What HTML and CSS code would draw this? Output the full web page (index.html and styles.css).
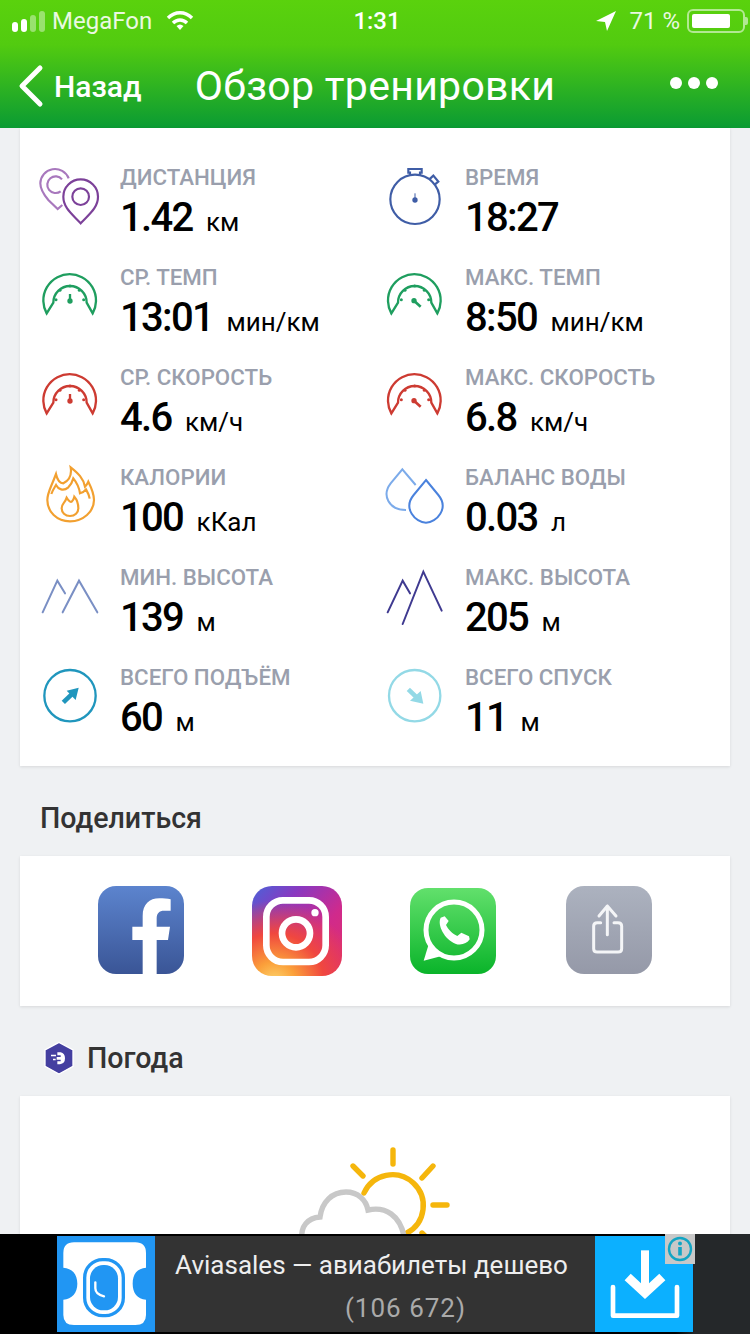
FILE: index.html
```html
<!DOCTYPE html>
<html lang="ru">
<head>
    <meta charset="UTF-8">
    <title>Обзор тренировки</title>
    <link rel="stylesheet" href="styles.css">
</head>
<body>
    <header class="top">
        <div class="status">
            <div class="status-left">
                <span class="signal"><i class="on"></i><i class="on"></i><i></i><i></i></span>
                <span class="carrier">MegaFon</span>
                <svg class="wifi" width="28" height="22" viewBox="0 0 28 22">
                    <path d="M2 8 C9 1 19 1 26 8" fill="none" stroke="#fff" stroke-width="3.4"/>
                    <path d="M7 13 C11 9 17 9 21 13" fill="none" stroke="#fff" stroke-width="3.4"/>
                    <path d="M10.5 16 C13 14 15 14 17.5 16 L14 20 Z" fill="#fff"/>
                </svg>
            </div>
            <div class="clock">1:31</div>
            <div class="status-right">
                <svg width="20" height="20" viewBox="0 0 20 20"><path d="M20 0 L0 10 L9 11 L11 20 Z" fill="#fff"/></svg>
                <span class="percent">71 %</span>
                <span class="battery"><b></b></span>
                <span class="battery-tip"></span>
            </div>
        </div>
        <nav class="nav">
            <a class="back">
                <svg width="28" height="44" viewBox="0 0 28 44"><path d="M24 4 L6 22 L24 40" fill="none" stroke="#fff" stroke-width="5" stroke-linecap="round" stroke-linejoin="round"/></svg>
                <span>Назад</span>
            </a>
            <h1 class="title">Обзор тренировки</h1>
            <div class="more"><i></i><i></i><i></i></div>
        </nav>
    </header>

    <section class="card stats">
        <div class="stat">
            <svg class="ico" viewBox="45 30 210 210" fill="none" stroke-width="6.5">
                <path d="M146 85 A44 44 0 0 0 61 100 Q61 122 85 150 L113 177 L127 165" stroke="#a878bd"/>
                <path d="M126 88 A25 25 0 1 0 122 124" stroke="#a878bd"/>
                <path d="M182 220 C160 195 130 175 130 140 A52 52 0 0 1 234 140 C234 175 204 195 182 220 Z" stroke="#7c4199"/>
                <circle cx="182" cy="140" r="25" stroke="#7c4199"/>
            </svg>
            <div class="stat-text"><div class="label">ДИСТАНЦИЯ</div><div class="value">1.42<span class="unit">км</span></div></div>
        </div>
        <div class="stat">
            <svg class="ico" viewBox="30 30 210 210" fill="none" stroke="#3f5da6" stroke-width="6.5">
                <circle cx="135" cy="148" r="74"/>
                <path d="M120 74 V68 H115 V57 H155 V68 H150 V76"/>
                <path d="M178 88 L190 77 L205 95 L194 104"/>
                <path d="M135 130 V150" stroke-width="3"/>
                <circle cx="135" cy="150" r="8" fill="#3f5da6" stroke="none"/>
            </svg>
            <div class="stat-text"><div class="label">ВРЕМЯ</div><div class="value">18:27</div></div>
        </div>
        <div class="stat">
            <svg class="ico" viewBox="45 330 210 210" fill="none" stroke="#1f9e5f" stroke-width="7">
                <path d="M80 490 A79 79 0 1 1 218 490 L200 458 A50 50 0 1 0 100 458 Z"/>
                <g fill="#1f9e5f" stroke="none"><circle cx="108" cy="449" r="4.5"/><circle cx="120" cy="421" r="4.5"/><circle cx="150" cy="408" r="4.5"/><circle cx="178" cy="421" r="4.5"/><circle cx="191" cy="449" r="4.5"/><circle cx="150" cy="453" r="8"/></g>
                <path d="M150 453 V432"/>
            </svg>
            <div class="stat-text"><div class="label">СР. ТЕМП</div><div class="value">13:01<span class="unit">мин/км</span></div></div>
        </div>
        <div class="stat">
            <svg class="ico" viewBox="30 330 210 210" fill="none" stroke="#1f9e5f" stroke-width="7">
                <path d="M64 490 A79 79 0 1 1 202 490 L184 458 A50 50 0 1 0 84 458 Z"/>
                <g fill="#1f9e5f" stroke="none"><circle cx="94" cy="449" r="4.5"/><circle cx="105" cy="421" r="4.5"/><circle cx="134" cy="408" r="4.5"/><circle cx="163" cy="421" r="4.5"/><circle cx="176" cy="449" r="4.5"/><circle cx="132" cy="452" r="8"/></g>
                <path d="M132 452 L152 470" stroke-width="8"/>
            </svg>
            <div class="stat-text"><div class="label">МАКС. ТЕМП</div><div class="value">8:50<span class="unit">мин/км</span></div></div>
        </div>
        <div class="stat">
            <svg class="ico" viewBox="45 630 210 210" fill="none" stroke="#cd3b32" stroke-width="7">
                <path d="M80 790 A79 79 0 1 1 218 790 L200 758 A50 50 0 1 0 100 758 Z"/>
                <g fill="#cd3b32" stroke="none"><circle cx="108" cy="749" r="4.5"/><circle cx="120" cy="721" r="4.5"/><circle cx="150" cy="708" r="4.5"/><circle cx="178" cy="721" r="4.5"/><circle cx="191" cy="749" r="4.5"/><circle cx="150" cy="753" r="8"/></g>
                <path d="M150 753 V732"/>
            </svg>
            <div class="stat-text"><div class="label">СР. СКОРОСТЬ</div><div class="value">4.6<span class="unit">км/ч</span></div></div>
        </div>
        <div class="stat">
            <svg class="ico" viewBox="30 630 210 210" fill="none" stroke="#cd3b32" stroke-width="7">
                <path d="M64 790 A79 79 0 1 1 202 790 L184 758 A50 50 0 1 0 84 758 Z"/>
                <g fill="#cd3b32" stroke="none"><circle cx="94" cy="749" r="4.5"/><circle cx="105" cy="721" r="4.5"/><circle cx="134" cy="708" r="4.5"/><circle cx="163" cy="721" r="4.5"/><circle cx="176" cy="749" r="4.5"/><circle cx="132" cy="752" r="8"/></g>
                <path d="M132 752 L152 770" stroke-width="8"/>
            </svg>
            <div class="stat-text"><div class="label">МАКС. СКОРОСТЬ</div><div class="value">6.8<span class="unit">км/ч</span></div></div>
        </div>
        <div class="stat">
            <svg class="ico" viewBox="45 30 210 210" fill="none" stroke="#f2a030" stroke-width="6.5">
                <path d="M150 214 C110 214 82 185 82 150 C82 128 92 115 108 72 C112 90 120 100 130 100 C150 90 155 70 152 52 C175 70 190 85 195 110 C200 105 203 100 205 95 C215 115 222 130 222 150 C222 185 190 214 150 214 Z"/>
                <path d="M94 132 C97 122 102 115 108 105 C115 118 130 125 145 112 C155 102 158 92 160 85 C172 100 178 115 180 130 C187 128 195 122 198 118 C205 130 208 138 209 146"/>
                <path d="M150 198 C135 198 125 188 125 175 C125 160 135 160 140 143 C145 150 150 158 155 155 C160 150 162 145 163 140 C172 150 175 165 175 175 C175 188 165 198 150 198 Z"/>
            </svg>
            <div class="stat-text"><div class="label">КАЛОРИИ</div><div class="value">100<span class="unit">кКал</span></div></div>
        </div>
        <div class="stat">
            <svg class="ico" viewBox="30 30 210 210" fill="none" stroke-width="6">
                <path d="M137 105 L97 58 L62 100 C35 135 55 180 108 180" stroke="#7cabea"/>
                <path d="M168 90 L205 135 C238 175 200 218 168 218 C136 218 98 175 131 135 Z" stroke="#4a82dd"/>
            </svg>
            <div class="stat-text"><div class="label">БАЛАНС ВОДЫ</div><div class="value">0.03<span class="unit">л</span></div></div>
        </div>
        <div class="stat">
            <svg class="ico" viewBox="45 330 210 210" fill="none" stroke="#7a8fc4" stroke-width="6" stroke-linecap="round">
                <path d="M68 487 L112 392 L135 430"/>
                <path d="M128 487 L177 392 L232 487"/>
            </svg>
            <div class="stat-text"><div class="label">МИН. ВЫСОТА</div><div class="value">139<span class="unit">м</span></div></div>
        </div>
        <div class="stat">
            <svg class="ico" viewBox="30 330 210 210" fill="none" stroke="#3f3a90" stroke-width="6" stroke-linecap="round">
                <path d="M53 487 L98 392 L120 430"/>
                <path d="M98 522 L160 365 L215 482"/>
            </svg>
            <div class="stat-text"><div class="label">МАКС. ВЫСОТА</div><div class="value">205<span class="unit">м</span></div></div>
        </div>
        <div class="stat">
            <svg class="ico" viewBox="45 630 210 210" fill="none" stroke="#2096bd" stroke-width="7">
                <circle cx="150" cy="737" r="77"/>
                <path d="M130 757 L155 733" stroke-width="14"/>
                <path d="M176 713 L140 722 L167 750 Z" fill="#2096bd" stroke="none"/>
            </svg>
            <div class="stat-text"><div class="label">ВСЕГО ПОДЪЁМ</div><div class="value">60<span class="unit">м</span></div></div>
        </div>
        <div class="stat">
            <svg class="ico" viewBox="30 630 210 210" fill="none" stroke="#93d9e6" stroke-width="7">
                <circle cx="134" cy="737" r="77"/>
                <path d="M115 718 L140 742" stroke-width="14"/>
                <path d="M160 761 L120 752 L152 723 Z" fill="#93d9e6" stroke="none"/>
            </svg>
            <div class="stat-text"><div class="label">ВСЕГО СПУСК</div><div class="value">11<span class="unit">м</span></div></div>
        </div>
    </section>

    <h2 class="heading">Поделиться</h2>
    <section class="card share">
        <div class="tile fb">
            <svg viewBox="54 48 258 264"><path d="M230 312 V210 H264 L270 170 H230 V145 C230 130 238 122 252 122 H272 V88 C262 86 250 85 238 85 C208 85 188 103 188 138 V170 H157 V210 H188 V312 Z" fill="#fff"/></svg>
        </div>
        <div class="tile ig">
            <svg viewBox="517 48 268 270" fill="none" stroke="#fff" stroke-width="20">
                <rect x="559" y="91" width="178" height="185" rx="50"/>
                <circle cx="648" cy="190" r="42"/>
                <circle cx="705" cy="128" r="11" fill="#fff" stroke="none"/>
            </svg>
        </div>
        <div class="tile wa">
            <svg viewBox="60 54 256 258">
                <circle cx="191" cy="180" r="84" fill="none" stroke="#fff" stroke-width="15"/>
                <path d="M116 220 L100 272 L154 258 Z" fill="#fff"/>
                <path d="M163 139 L151 143 C140 165 162 207 195 221 C210 227 230 222 238 208 L236 199 L213 188 L201 198 C186 192 173 177 167 165 L175 153 Z" fill="#fff"/>
            </svg>
        </div>
        <div class="tile more-share">
            <svg viewBox="528 48 258 264" fill="none" stroke="#f4f5f7" stroke-width="9" stroke-linecap="round" stroke-linejoin="round">
                <path d="M632 158 H622 Q611 158 611 168 V236 Q611 246 622 246 H684 Q695 246 695 236 V168 Q695 158 684 158 H672"/>
                <path d="M652 194 V108 M627 138 L652 108 L678 138"/>
            </svg>
        </div>
    </section>

    <h2 class="heading with-logo">
        <svg width="32" height="36" viewBox="125 25 96 106">
            <path d="M173 31 L215 54 V103 L173 126 L131 103 V54 Z" fill="#443fa0" stroke="#fff" stroke-width="4"/>
            <path d="M168 61 H178 Q191 64 191 79 Q191 95 176 97 H168 V88 H178 V83 H166 V75 H178 V70 H168 Z M149 68 H164 V73 H149 Z M155 80 H163 V85 H155 Z" fill="#fff"/>
        </svg>
        Погода
    </h2>
    <section class="card weather">
        <svg width="200" height="120" viewBox="275 1140 200 120" fill="none" stroke-width="5.4" stroke-linecap="round">
            <g stroke="#f5b60c">
                <path d="M364 1193 A31 31 0 1 1 407 1233"/>
                <path d="M393 1150 V1164 M353 1166 L363 1176 M433 1166 L422 1178 M433 1205 H447 M422 1233 L432 1243"/>
            </g>
            <path d="M302 1240 C300 1226 308 1218 320 1217 C322 1202 332 1192 346 1192 C358 1192 366 1200 368 1210 C386 1206 400 1216 404 1236" stroke="#c8c8c8"/>
        </svg>
    </section>

    <aside class="ad">
        <div class="ad-inner">
            <svg class="ad-logo" viewBox="171 33 294 288">
                <rect x="171" y="33" width="294" height="288" fill="#2196f3"/>
                <path d="M222 52 H406 Q438 52 438 84 V128 C412 130 398 146 398 176 C398 204 412 222 438 224 V270 Q438 300 406 300 H222 Q190 300 190 270 V224 C216 222 232 204 232 176 C232 146 216 130 190 128 V84 Q190 52 222 52 Z" fill="#fff"/>
                <rect x="254" y="104" width="116" height="168" rx="54" fill="none" stroke="#2196f3" stroke-width="10"/>
                <rect x="270" y="120" width="84" height="136" rx="40" fill="#2196f3"/>
                <path d="M286 172 V190 Q286 208 312 214" fill="none" stroke="#fff" stroke-width="7" stroke-linecap="round"/>
            </svg>
            <div class="ad-text">
                <div class="ad-title">Aviasales — авиабилеты дешево</div>
                <div class="ad-count">(106 672)</div>
            </div>
            <div class="ad-btn">
                <svg width="98" height="96" viewBox="660 33 294 288" fill="none" stroke="#fff" stroke-linecap="round">
                    <path d="M714 186 V272 H906 V186" stroke-width="14" stroke-linejoin="round"/>
                    <path d="M810 76 V190" stroke-width="24" stroke-linecap="butt"/>
                    <path d="M758 156 L810 204 L862 156" stroke-width="27" stroke-linecap="butt"/>
                </svg>
            </div>
            <div class="ad-info">
                <svg width="26" height="26" viewBox="0 0 26 26">
                    <circle cx="13" cy="13" r="11" fill="none" stroke="#12a5c4" stroke-width="2.4"/>
                    <rect x="11.2" y="11" width="3.6" height="8.5" fill="#12a5c4"/>
                    <circle cx="13" cy="7.6" r="2" fill="#12a5c4"/>
                </svg>
            </div>
        </div>
    </aside>
</body>
</html>
```

FILE: styles.css
```css
*{
    box-sizing: border-box;
}
html, body{
    margin: 0;
    height: 1334px;
    overflow: hidden;
}
body{
    width: 750px;
    background-color: #eff1f3;
    font-family: Roboto, "Noto Sans", sans-serif;
    color: #000;
}

/* top bar */
.top{
    height: 128px;
    background: linear-gradient(to bottom, #5ad20d 0%, #52cb10 35%, #0a9b33 100%);
    color: #fff;
}
.status{
    height: 42px;
    display: grid;
    grid-template-columns: 1fr auto 1fr;
    align-items: center;
    padding: 0 8px 0 12px;
    font-size: 24px;
}
.status-left, .status-right{
    display: flex;
    align-items: center;
}
.status-right{
    justify-content: flex-end;
    margin-right: -6px;
}
.signal{
    display: flex;
    align-items: flex-end;
    gap: 3px;
    width: 40px;
}
.signal i{
    width: 6px;
    height: 14px;
    border-radius: 3px;
    background-color: rgba(255,255,255,.4);
}
.signal i:nth-child(1){
    height: 10px;
    background-color: #fff;
}
.signal i:nth-child(2){
    height: 13px;
    background-color: #fff;
}
.signal i:nth-child(3){
    height: 17px;
}
.signal i:nth-child(4){
    height: 21px;
}
.carrier{
    opacity: .88;
    margin-right: 14px;
}
.percent{
    opacity: .88;
    margin: 0 7px 0 13px;
}
.battery{
    width: 58px;
    height: 24px;
    padding: 3px;
    border: 2px solid rgba(255,255,255,.55);
    border-radius: 6px;
}
.battery b{
    display: block;
    width: 38px;
    height: 100%;
    border-radius: 2px;
    background-color: #fff;
}
.battery-tip{
    width: 3px;
    height: 8px;
    border-radius: 0 2px 2px 0;
    background-color: rgba(255,255,255,.55);
}
.clock{
    font-weight: 500;
}
.nav{
    height: 86px;
    padding-top: 2px;
    display: grid;
    grid-template-columns: 1fr auto 1fr;
    align-items: center;
}
.back{
    display: flex;
    align-items: center;
    padding-left: 16px;
    font-size: 30px;
    gap: 10px;
}
.back span{
    font-weight: 500;
}
.title{
    margin: 0;
    font-size: 41px;
    font-weight: 400;
    letter-spacing: .3px;
}
.more{
    display: flex;
    justify-content: flex-end;
    gap: 6px;
    padding-right: 32px;
    margin-top: -6px;
}
.more i{
    width: 12px;
    height: 12px;
    border-radius: 50%;
    background-color: #fff;
}

/* cards */
.card{
    margin: 0 20px;
    background-color: #fff;
    box-shadow: 0 1px 3px rgba(0,0,0,.1);
}
.stats{
    height: 638px;
    padding: 32px 0 0 15px;
    display: grid;
    grid-template-columns: 345px 345px;
    grid-auto-rows: 100px;
}
.stat{
    display: flex;
    gap: 15px;
}
.ico{
    width: 70px;
    height: 70px;
    flex: none;
    overflow: visible;
}
.label{
    height: 35px;
    line-height: 34px;
    font-size: 22.3px;
    font-weight: 500;
    color: #9a9fad;
}
.value{
    height: 46px;
    line-height: 46px;
    font-size: 40px;
    font-weight: 500;
    letter-spacing: -1.7px;
}
.unit{
    margin-left: 13.5px;
    font-size: 26px;
    font-weight: 400;
    letter-spacing: 0;
}

/* section titles */
.heading{
    height: 90px;
    margin: 0;
    padding: 14px 0 0 40px;
    display: flex;
    align-items: center;
    font-size: 28.6px;
    font-weight: 500;
    color: #333;
}
.with-logo{
    padding-left: 43px;
    gap: 12px;
}

/* share buttons */
.share{
    height: 150px;
    padding: 30px 0 0 78px;
    display: flex;
    align-items: flex-start;
    gap: 68px;
}
.tile{
    width: 86px;
    height: 88px;
    border-radius: 18px;
    overflow: hidden;
}
.tile svg{
    display: block;
    width: 100%;
    height: 100%;
}
.fb{
    background: linear-gradient(to bottom, #5c84ce, #3a5596);
}
.ig{
    width: 90px;
    height: 90px;
    border-radius: 20px;
    background:
        radial-gradient(circle at 25% 108%, #fdd870 0%, #fba03a 18%, #f0473f 42%, rgba(214,36,130,0) 70%),
        linear-gradient(to bottom right, #4a63d8 0%, #8a38c0 28%, #d02a8c 62%, #e0306a 100%);
}
.wa{
    height: 86px;
    margin-top: 2px;
    background: linear-gradient(to bottom, #62e06c, #0ab42a);
}
.more-share{
    margin-left: 2px;
    background: linear-gradient(to bottom, #acb2bf, #9599a8);
}
.weather{
    height: 300px;
    padding-top: 44px;
    display: flex;
    justify-content: center;
    align-items: flex-start;
}

/* ad banner stays over the page */
.ad{
    position: fixed;
    left: 0;
    bottom: 0;
    width: 750px;
    height: 100px;
    padding: 2px 57px;
    background: linear-gradient(to right, #000 0%, #000 90%, #25282a 92.6%);
}
.ad-inner{
    position: relative;
    height: 96px;
    display: flex;
    background-color: #333;
}
.ad-logo{
    width: 98px;
    height: 96px;
    flex: none;
}
.ad-text{
    flex: 1;
    padding-right: 7px;
    text-align: center;
    font-size: 26px;
    color: #eee;
}
.ad-title{
    height: 58px;
    line-height: 58px;
}
.ad-count{
    padding-left: 68px;
    line-height: 28px;
    color: #aaa;
    letter-spacing: 1px;
}
.ad-btn{
    width: 98px;
    height: 96px;
    flex: none;
    background-color: #0cb0ff;
}
.ad-info{
    position: absolute;
    right: -2px;
    top: -2px;
    width: 30px;
    height: 30px;
    padding: 2px;
    background-color: #c8c8c8;
}
.ad-info svg{
    display: block;
}
```
